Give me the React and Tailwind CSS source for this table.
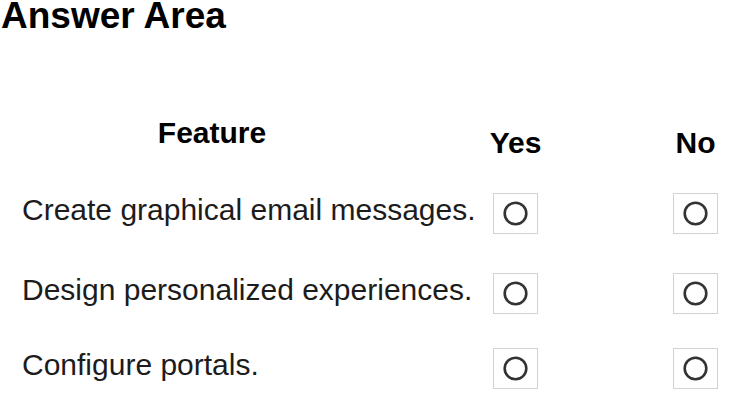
import React from 'react';

const rows = [
  { text: 'Create graphical email messages.', mt: 'mt-[33px]' },
  { text: 'Design personalized experiences.', mt: 'mt-[39px]' },
  { text: 'Configure portals.', mt: 'mt-[34px]' },
];

function RadioBox() {
  return (
    <div className="w-[45px] h-[41px] border border-[#d2d2d2] bg-white flex items-center justify-center">
      <svg width="25" height="25" viewBox="0 0 25 25">
        <circle cx="12.5" cy="12.5" r="10.8" fill="none" stroke="#333333" strokeWidth="2.6" />
      </svg>
    </div>
  );
}

export default function App() {
  return (
    <div
      className="w-[740px] h-[407px] bg-white text-[#1c1c1c] overflow-hidden"
      style={{ fontFamily: '"Liberation Sans", Arial, sans-serif' }}
    >
      {/* Title */}
      <h1 className="text-[37px] leading-[32px] font-bold text-black pl-[1px]">Answer Area</h1>

      {/* Column headers */}
      <div className="mt-[84px] grid grid-cols-[493px_45px_135px_45px] items-start">
        <div className="pr-[69px] text-center text-[30px] leading-[34px] font-bold text-black">Feature</div>
        <div className="mt-[10px] flex justify-center whitespace-nowrap text-[30px] leading-[34px] font-bold text-black">
          Yes
        </div>
        <div />
        <div className="mt-[10px] flex justify-center whitespace-nowrap text-[30px] leading-[34px] font-bold text-black">
          No
        </div>
      </div>

      {/* Statement rows */}
      {rows.map((row, i) => (
        <div key={i} className={`${row.mt} grid grid-cols-[493px_45px_135px_45px] items-start`}>
          <div className="pl-[22px] text-[30px] leading-[34px] whitespace-nowrap">{row.text}</div>
          <RadioBox />
          <div />
          <RadioBox />
        </div>
      ))}
    </div>
  );
}
